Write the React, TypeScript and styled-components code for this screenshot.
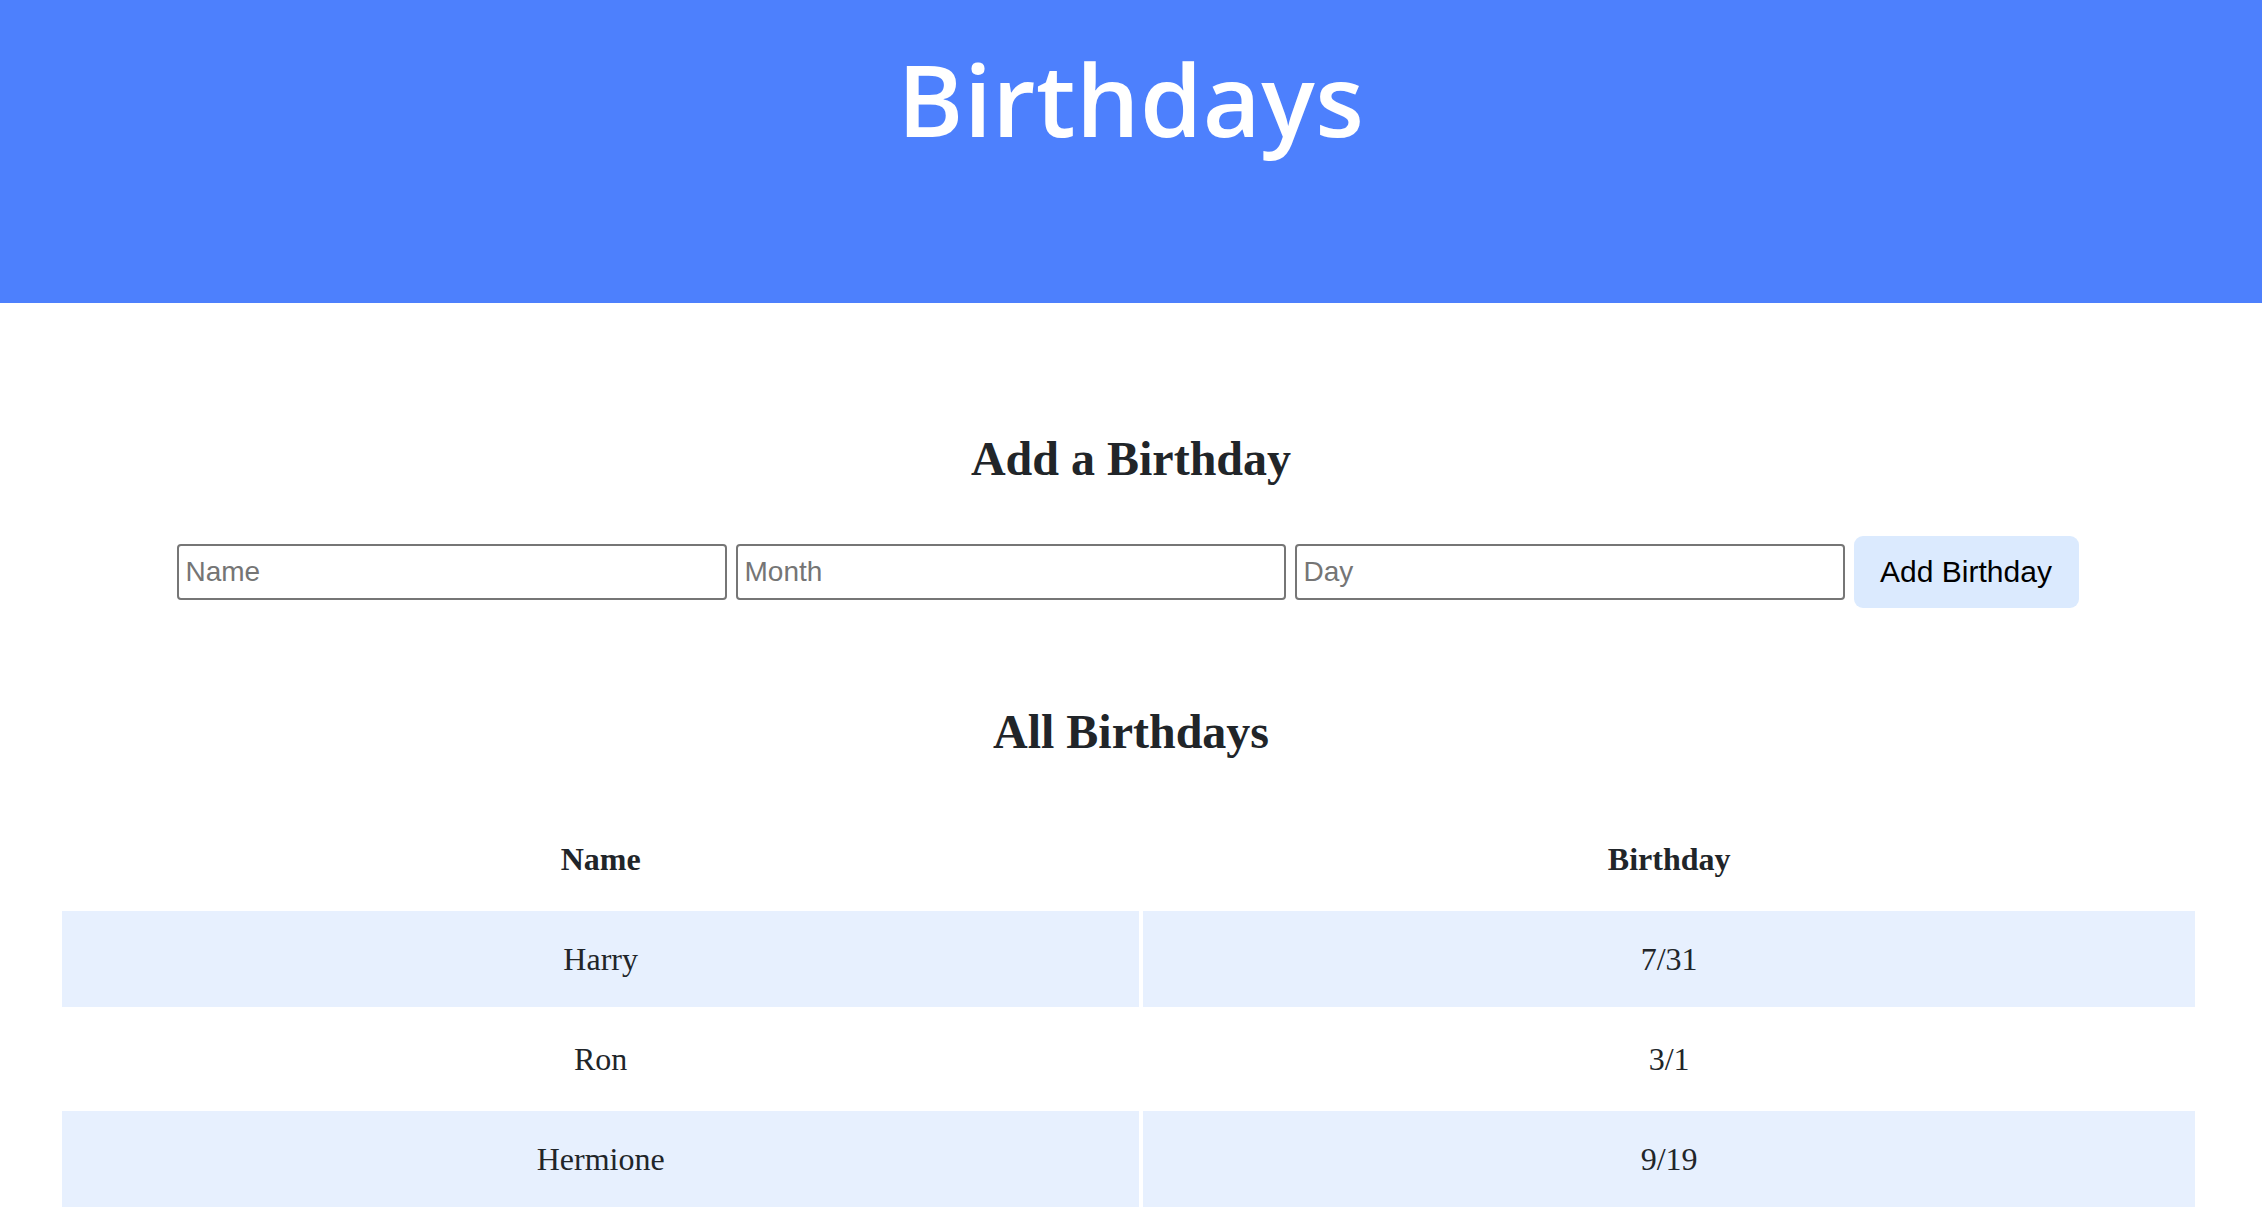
import React from "react";
import styled, { createGlobalStyle } from "styled-components";

const GlobalStyle = createGlobalStyle`
  html, body {
    margin: 0;
    padding: 0;
    background: #ffffff;
  }
  body {
    font-family: "Liberation Serif", "Times New Roman", serif;
    color: #212529;
  }
`;

const Header = styled.header`
  height: 303px;
  background: #4d80fd;
  display: flex;
  justify-content: center;
  align-items: flex-start;
  box-sizing: border-box;
  padding-top: 38px;
`;

const Title = styled.h1`
  margin: 0;
  font-family: "Open Sans", "Noto Sans", sans-serif;
  font-weight: 600;
  font-size: 100px;
  line-height: 120px;
  letter-spacing: 0.5px;
  color: #ffffff;
`;

const Main = styled.main`
  display: flex;
  flex-direction: column;
  align-items: center;
  padding: 128px 0 0;
`;

const SectionTitle = styled.h2<{ $gap: number }>`
  margin: 0 0 ${(p) => p.$gap}px;
  font-family: "Liberation Serif", "Times New Roman", serif;
  font-weight: 700;
  font-size: 48px;
  line-height: 56px;
  color: #212529;
  text-align: center;
`;

const FormRow = styled.form`
  display: flex;
  align-items: center;
  gap: 9px;
  padding-right: 7px;
  margin-bottom: 96px;
`;

const TextInput = styled.input`
  box-sizing: border-box;
  width: 550px;
  height: 56px;
  padding: 0 7px;
  border: 2px solid #767676;
  border-radius: 4px;
  font-family: "Liberation Sans", Arial, sans-serif;
  font-size: 28px;
  color: #000;
  background: #fff;
  outline: none;
  &::placeholder {
    color: #757575;
  }
`;

const AddButton = styled.button`
  box-sizing: border-box;
  width: 225px;
  height: 72px;
  border: none;
  border-radius: 9px;
  background: #dbeafe;
  font-family: "Liberation Sans", Arial, sans-serif;
  font-size: 30px;
  color: #000;
  cursor: pointer;
`;

const TableWrap = styled.div`
  align-self: stretch;
  padding: 0 63px 0 58px;
`;

const Table = styled.table`
  width: 100%;
  border-collapse: separate;
  border-spacing: 4px;
`;

const HeadCell = styled.th<{ $w?: string }>`
  width: ${(p) => p.$w ?? "auto"};
  height: 96px;
  box-sizing: border-box;
  padding: 0;
  font-family: "Liberation Serif", "Times New Roman", serif;
  font-weight: 700;
  font-size: 32px;
  line-height: 36px;
  color: #212529;
  text-align: center;
  vertical-align: middle;
`;

const Row = styled.tr<{ $striped: boolean }>`
  background: transparent;
  & > td {
    background: ${(p) => (p.$striped ? "#e7f0fe" : "transparent")};
  }
`;

const Cell = styled.td`
  height: 96px;
  box-sizing: border-box;
  padding: 0;
  font-family: "Liberation Serif", "Times New Roman", serif;
  font-size: 32px;
  line-height: 36px;
  color: #212529;
  text-align: center;
  vertical-align: middle;
`;

const birthdays = [
  { name: "Harry", date: "7/31" },
  { name: "Ron", date: "3/1" },
  { name: "Hermione", date: "9/19" },
];

export default function App() {
  return (
    <>
      <GlobalStyle />
      <Header>
        <Title>Birthdays</Title>
      </Header>
      <Main>
        <SectionTitle $gap={49}>Add a Birthday</SectionTitle>
        <FormRow onSubmit={(e) => e.preventDefault()}>
          <TextInput placeholder="Name" />
          <TextInput placeholder="Month" />
          <TextInput placeholder="Day" />
          <AddButton type="submit">Add Birthday</AddButton>
        </FormRow>
        <SectionTitle $gap={47}>All Birthdays</SectionTitle>
        <TableWrap>
          <Table>
            <thead>
              <tr>
                <HeadCell $w="50.6%">Name</HeadCell>
                <HeadCell>Birthday</HeadCell>
              </tr>
            </thead>
            <tbody>
              {birthdays.map((b, i) => (
                <Row key={b.name} $striped={i % 2 === 0}>
                  <Cell>{b.name}</Cell>
                  <Cell>{b.date}</Cell>
                </Row>
              ))}
            </tbody>
          </Table>
        </TableWrap>
      </Main>
    </>
  );
}
